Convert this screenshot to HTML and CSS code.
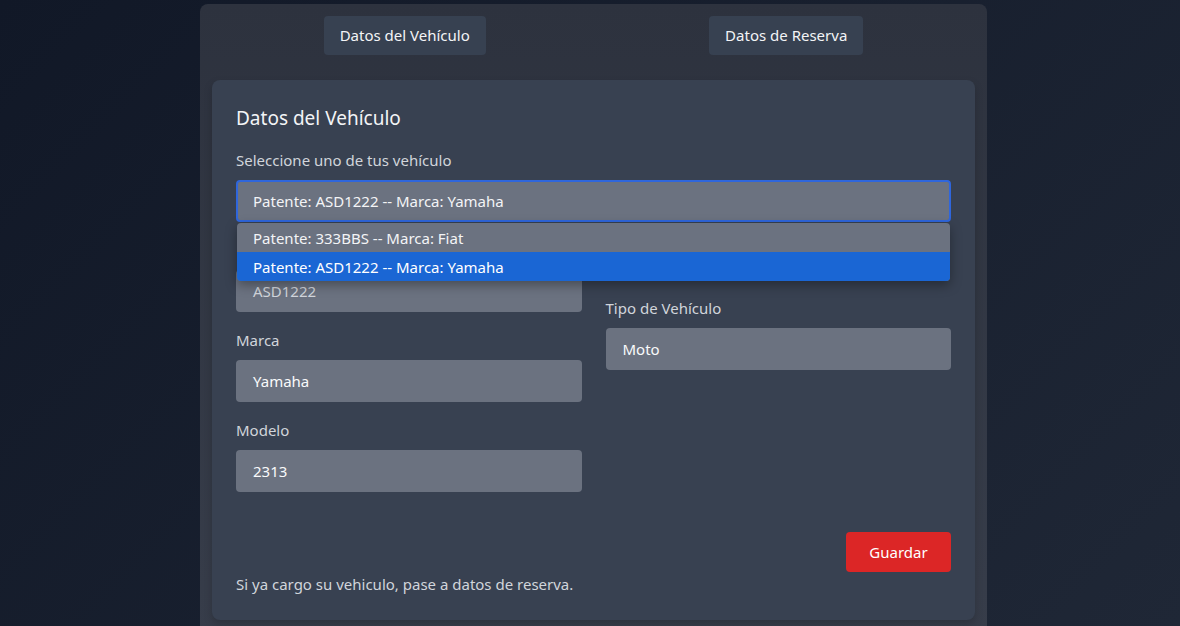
FILE: index.html
```html
<!DOCTYPE html>
<html lang="es">
<head>
<meta charset="utf-8">
<title>Datos del Vehículo</title>
<link rel="stylesheet" href="styles.css">
</head>
<body>
<div class="panel">
  <nav class="tabs">
    <button class="tab">Datos del Vehículo</button>
    <button class="tab">Datos de Reserva</button>
  </nav>
  <section class="card">
    <h2 class="card-title">Datos del Vehículo</h2>
    <div class="field field-select">
      <label class="label">Seleccione uno de tus vehículo</label>
      <div class="select-wrap">
        <div class="select">Patente: ASD1222 -- Marca: Yamaha</div>
        <ul class="dropdown">
          <li class="option">Patente: 333BBS -- Marca: Fiat</li>
          <li class="option selected">Patente: ASD1222 -- Marca: Yamaha</li>
        </ul>
      </div>
    </div>
    <div class="grid">
      <div class="col">
        <div class="field">
          <label class="label label-hidden">Patente</label>
          <div class="input input-dim">ASD1222</div>
        </div>
        <div class="field">
          <label class="label">Marca</label>
          <div class="input">Yamaha</div>
        </div>
        <div class="field">
          <label class="label">Modelo</label>
          <div class="input">2313</div>
        </div>
      </div>
      <div class="col col-right">
        <div class="field">
          <label class="label">Tipo de Vehículo</label>
          <div class="input">Moto</div>
        </div>
      </div>
    </div>
    <div class="actions">
      <button class="btn-save">Guardar</button>
    </div>
    <p class="note">Si ya cargo su vehiculo, pase a datos de reserva.</p>
  </section>
</div>
</body>
</html>
```
FILE: styles.css
```css
html, body {
  margin: 0;
  height: 100%;
}
body {
  background: linear-gradient(135deg, #111827 0%, #1f2736 100%);
  font-family: "Noto Sans", "Open Sans", sans-serif;
  color: #f3f4f6;
  overflow: hidden;
}
.panel {
  margin: 4px 0 0 200px;
  width: 787px;
  box-sizing: border-box;
  padding: 12px;
  border-radius: 8px;
  background: linear-gradient(to bottom, #2d323e, #373d4a);
  min-height: 640px;
}
.tabs {
  display: flex;
  justify-content: space-around;
  margin-bottom: 25px;
}
.tab {
  font: inherit;
  font-size: 15px;
  line-height: 23px;
  color: #f3f4f6;
  background: #374151;
  border: none;
  border-radius: 4px;
  padding: 8px 16px;
}
.card {
  background: #384151;
  border-radius: 8px;
  padding: 24px;
  box-shadow: 0 4px 8px rgba(0, 0, 0, 0.18);
}
.card-title {
  margin: 0 0 16px;
  font-size: 19px;
  line-height: 28px;
  font-weight: 400;
  color: #f3f4f6;
}
.field {
  margin-bottom: 16px;
}
.label {
  display: block;
  font-size: 15px;
  line-height: 24px;
  color: #d1d5db;
  margin-bottom: 8px;
}
.label-hidden {
  visibility: hidden;
}
.select-wrap {
  position: relative;
}
.select {
  box-sizing: border-box;
  height: 42px;
  display: flex;
  align-items: center;
  padding: 0 15px;
  background: #6b7280;
  border: 2px solid #2f66dc;
  border-radius: 4px;
  font-size: 15px;
  color: #f3f4f6;
}
.dropdown {
  position: absolute;
  top: 43px;
  left: 1px;
  right: 1px;
  margin: 0;
  padding: 0;
  list-style: none;
  background: #6b7280;
  border-radius: 4px;
  overflow: hidden;
  box-shadow: 0 4px 12px rgba(0, 0, 0, 0.35);
  z-index: 2;
}
.option {
  height: 29px;
  display: flex;
  align-items: center;
  padding: 0 16px;
  font-size: 15px;
  color: #f3f4f6;
}
.option.selected {
  background: #1a66d4;
  color: #ffffff;
}
.grid {
  display: grid;
  grid-template-columns: 1fr 1fr;
  column-gap: 24px;
}
.col-right {
  padding-top: 58px;
}
.input {
  box-sizing: border-box;
  height: 42px;
  display: flex;
  align-items: center;
  padding: 0 17px;
  background: #6b7280;
  border-radius: 4px;
  font-size: 15px;
  color: #f9fafb;
}
.input-dim {
  color: #d1d5db;
}
.actions {
  display: flex;
  justify-content: flex-end;
  margin-top: 24px;
}
.btn-save {
  font: inherit;
  font-size: 15px;
  line-height: 24px;
  color: #ffffff;
  background: #dc2626;
  border: none;
  border-radius: 4px;
  padding: 8px 0;
  width: 105px;
}
.note {
  margin: 0;
  font-size: 15px;
  line-height: 24px;
  color: #d1d5db;
}
```
